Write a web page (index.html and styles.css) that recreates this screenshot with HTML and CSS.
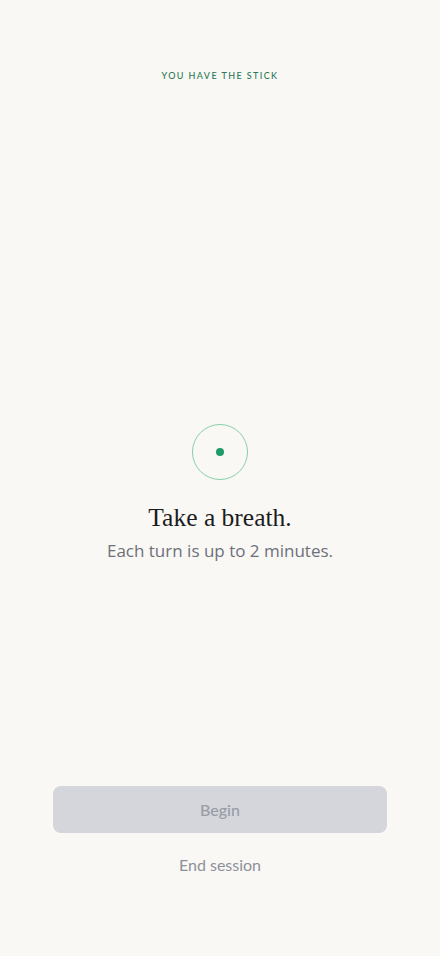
FILE: index.html
```html
<!DOCTYPE html>
<html lang="en">
<head>
<meta charset="utf-8">
<title>Take a breath</title>
<link rel="stylesheet" href="styles.css">
</head>
<body>
<div class="screen">
  <div class="status">YOU HAVE THE STICK</div>
  <main class="center">
    <div class="ring"><span class="dot"></span></div>
    <h1 class="title">Take a breath.</h1>
    <p class="subtitle">Each turn is up to 2 minutes.</p>
  </main>
  <footer class="actions">
    <button class="begin" disabled>Begin</button>
    <button class="end">End session</button>
  </footer>
</div>
</body>
</html>
```
FILE: styles.css
```css
* { box-sizing: border-box; }
html, body { margin: 0; padding: 0; background: #f9f8f5; }
body { font-family: "Lato", "Open Sans", sans-serif; }
.screen {
  height: 956px;
  display: flex;
  flex-direction: column;
  padding: 69px 53px 81px;
}
.status {
  text-align: center;
  font-family: "Lato", sans-serif;
  font-size: 9px;
  line-height: 14px;
  letter-spacing: 1.4px;
  color: #2b7a55;
  font-weight: 500;
}
.center {
  flex: 1;
  display: flex;
  flex-direction: column;
  align-items: center;
  justify-content: center;
  padding-top: 118px;
}
.ring {
  width: 56px;
  height: 56px;
  border: 1.5px solid #86cfa9;
  border-radius: 50%;
  display: flex;
  align-items: center;
  justify-content: center;
}
.dot {
  width: 8px;
  height: 8px;
  border-radius: 50%;
  background: #1f9a69;
}
.title {
  margin: 23px 0 0;
  font-family: "Liberation Serif", "DejaVu Serif", serif;
  font-weight: 400;
  font-size: 25.5px;
  line-height: 30px;
  color: #1c1c1c;
}
.subtitle {
  margin: 6px 0 0;
  font-family: "Open Sans", sans-serif;
  font-size: 17px;
  line-height: 24px;
  color: #6d707a;
}
.actions {
  display: flex;
  flex-direction: column;
  align-items: center;
  gap: 22px;
}
.begin {
  width: 100%;
  height: 47px;
  border: none;
  border-radius: 8px;
  background: #d4d6db;
  color: #9a9ca5;
  font-family: "Lato", sans-serif;
  font-size: 16px;
  font-weight: 500;
}
.end {
  border: none;
  background: none;
  padding: 0;
  font-family: "Lato", sans-serif;
  font-size: 16px;
  line-height: 20px;
  color: #8d9099;
}
```
